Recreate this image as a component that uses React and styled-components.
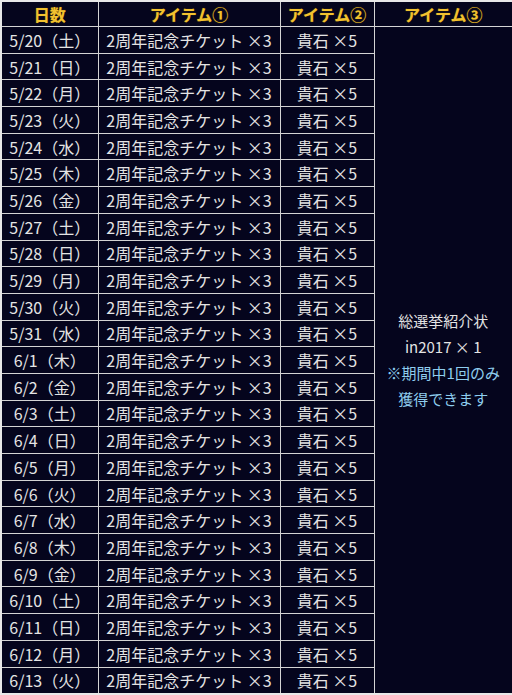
import React from "react";
import styled, { createGlobalStyle } from "styled-components";

const GlobalStyle = createGlobalStyle`
  html, body {
    margin: 0;
    padding: 0;
    background: #ffffff;
  }
  body {
    font-family: "Noto Sans CJK JP", "Noto Sans", sans-serif;
  }
`;

const Table = styled.table`
  width: 512px;
  border-collapse: collapse;
  table-layout: fixed;
  background: #05051d;
  border: 2px solid #e8e8e8;
  font-size: 16px;
  color: #e4e4e4;
`;

const Col = styled.col`
  width: ${(p) => p.$w}px;
`;

const Head = styled.th`
  height: 24px;
  padding: 0;
  border: 1px solid #d4d4d4;
  font-weight: bold;
  font-size: 16px;
  line-height: 1;
  color: #f2c230;
  text-shadow: 0 0 1px #8a6a00;
  text-align: center;
`;

const Cell = styled.td`
  height: 25.7px;
  padding: 0;
  border: 1px solid #d4d4d4;
  text-align: center;
  white-space: nowrap;
  line-height: 1;
`;

const NoteCell = styled.td`
  padding: 0;
  border: 1px solid #d4d4d4;
  text-align: center;
  vertical-align: middle;
  line-height: 26px;
  font-size: 15px;
`;

const Note = styled.div`
  color: #8fcdee;
`;

const weekdays = ["日", "月", "火", "水", "木", "金", "土"];

const buildDays = () => {
  const days = [];
  let wd = 6;
  for (let d = 20; d <= 31; d++) {
    days.push(`5/${d}（${weekdays[wd % 7]}）`);
    wd++;
  }
  for (let d = 1; d <= 13; d++) {
    days.push(`6/${d}（${weekdays[wd % 7]}）`);
    wd++;
  }
  return days;
};

const days = buildDays();

const App = () => {
  return (
    <>
      <GlobalStyle />
      <Table>
        <colgroup>
          <Col $w={97} />
          <Col $w={182} />
          <Col $w={94} />
          <Col $w={139} />
        </colgroup>
        <thead>
          <tr>
            <Head>日数</Head>
            <Head>アイテム①</Head>
            <Head>アイテム②</Head>
            <Head>アイテム③</Head>
          </tr>
        </thead>
        <tbody>
          {days.map((day, index) => (
            <tr key={day}>
              <Cell>{day}</Cell>
              <Cell>2周年記念チケット ×3</Cell>
              <Cell>貴石 ×5</Cell>
              {index === 0 && (
                <NoteCell rowSpan={days.length}>
                  <div>総選挙紹介状</div>
                  <div>in2017 × 1</div>
                  <Note>※期間中1回のみ</Note>
                  <Note>獲得できます</Note>
                </NoteCell>
              )}
            </tr>
          ))}
        </tbody>
      </Table>
    </>
  );
};

export default App;
